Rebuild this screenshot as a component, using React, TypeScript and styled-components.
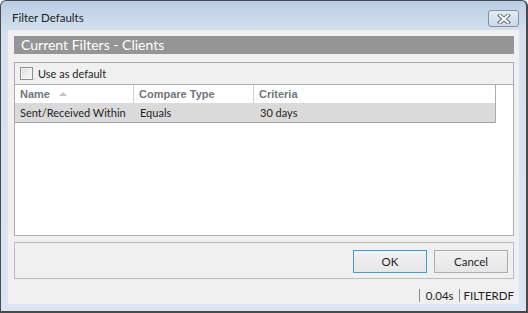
import React from 'react';
import styled, { createGlobalStyle } from 'styled-components';

const GlobalStyle = createGlobalStyle`
    html, body {
        margin: 0;
        padding: 0;
        background: #ffffff;
    }
    body {
        font-family: 'Lato', 'Open Sans', sans-serif;
        font-size: 11px;
        color: #1e1e1e;
    }
`;

const Window = styled.div`
    box-sizing: border-box;
    width: 528px;
    height: 313px;
    display: flex;
    flex-direction: column;
    border: 1px solid #4a4a4a;
    border-right-width: 2px;
    border-bottom-width: 2px;
    border-radius: 6px 6px 0 0;
    padding: 0 7px 7px 7px;
    background: linear-gradient(#bacee4 0px, #d3e1ef 30px, #d9e5f2 100%);
`;

const TitleBar = styled.div`
    height: 29px;
    display: flex;
    justify-content: space-between;
    align-items: flex-start;
    padding: 9px 0 0 4px;
    box-sizing: border-box;
`;

const Title = styled.div`
    font-size: 11.5px;
    line-height: 16px;
    color: #1e1e1e;
`;

const CloseButton = styled.div`
    box-sizing: border-box;
    width: 31px;
    height: 17px;
    border: 1px solid #8391a4;
    border-radius: 3px;
    background: linear-gradient(#e2eaf3, #cdd9e7);
    display: flex;
    align-items: center;
    justify-content: center;
`;

const Client = styled.div`
    flex: 1;
    display: flex;
    flex-direction: column;
    background: #f0f0f0;
    padding: 6px 5px 0 6px;
    min-height: 0;
`;

const SectionHeader = styled.div`
    height: 18px;
    background: #959595;
    color: #ffffff;
    font-size: 14px;
    line-height: 18px;
    padding-left: 7px;
`;

const FilterPanel = styled.div`
    margin-top: 8px;
    height: 174px;
    box-sizing: border-box;
    border: 1px solid #acacac;
    background: #ffffff;
    display: flex;
    flex-direction: column;
`;

const CheckRow = styled.div`
    height: 22px;
    box-sizing: border-box;
    background: #f0f0f0;
    border-bottom: 1px solid #acacac;
    display: flex;
    align-items: center;
    padding-left: 5px;
    gap: 5px;
`;

const CheckBox = styled.div`
    box-sizing: border-box;
    width: 13px;
    height: 13px;
    border: 1px solid #8e8f8f;
    background: linear-gradient(135deg, #dcdcdc, #fbfbfb);
    box-shadow: inset 0 0 0 1px #f4f4f4;
`;

const Grid = styled.div`
    width: 481px;
    box-sizing: border-box;
    border-right: 1px solid #acacac;
`;

const HeaderRow = styled.div`
    display: grid;
    grid-template-columns: 119px 120px 1fr;
    height: 18px;
`;

const HeaderCell = styled.div<{ $last?: boolean }>`
    font-family: 'Liberation Sans', Arial, sans-serif;
    font-weight: bold;
    font-size: 11px;
    color: #72767d;
    line-height: 18px;
    padding-left: 5px;
    border-right: ${(p) => (p.$last ? 'none' : '1px solid #d0d0d0')};
    display: flex;
    align-items: center;
`;

const SortArrow = styled.span`
    width: 0;
    height: 0;
    margin-left: 9px;
    margin-top: -1px;
    border-left: 4px solid transparent;
    border-right: 4px solid transparent;
    border-bottom: 4px solid #c4c4c4;
`;

const DataRow = styled.div`
    display: grid;
    grid-template-columns: 120px 120px 1fr;
    height: 19px;
    background: #dadada;
    border-bottom: 1px solid #a5a5a5;
`;

const DataCell = styled.div`
    padding-left: 5px;
    line-height: 19px;
    white-space: nowrap;
`;

const ButtonPanel = styled.div`
    margin-top: 6px;
    height: 37px;
    box-sizing: border-box;
    border: 1px solid #bcbcbc;
    display: flex;
    justify-content: flex-end;
    align-items: flex-start;
    padding: 7px 5px 0 0;
    gap: 7px;
`;

const Button = styled.div<{ $focused?: boolean }>`
    box-sizing: border-box;
    width: 74px;
    height: 23px;
    border: 1px solid ${(p) => (p.$focused ? '#3c9fd6' : '#adadad')};
    background: linear-gradient(#f2f2f2, #e6e6e6);
    display: flex;
    align-items: center;
    justify-content: center;
    font-size: 11.5px;
`;

const StatusBar = styled.div`
    flex: 1;
    display: flex;
    justify-content: flex-end;
    align-items: flex-end;
    padding: 0 0 2px 0;
`;

const StatusItem = styled.div`
    border-left: 1px solid #8a8a8a;
    height: 13px;
    line-height: 13px;
    padding-left: 4px;
    margin-left: 2px;
    font-size: 11.5px;
`;

const StatusValue = styled(StatusItem)`
    padding-left: 6px;
    padding-right: 3px;
`;

const CloseGlyph = () => (
    <svg width="14" height="10" viewBox="0 0 14 10">
        <path d="M3 1.5 L11 8.5 M11 1.5 L3 8.5" stroke="#606b79" strokeWidth="4" strokeLinecap="square" />
        <path d="M3 1.5 L11 8.5 M11 1.5 L3 8.5" stroke="#ffffff" strokeWidth="2" strokeLinecap="square" />
    </svg>
);

export default function App() {
    return (
        <>
            <GlobalStyle />
            <Window>
                <TitleBar>
                    <Title>Filter Defaults</Title>
                    <CloseButton>
                        <CloseGlyph />
                    </CloseButton>
                </TitleBar>
                <Client>
                    <SectionHeader>Current Filters - Clients</SectionHeader>
                    <FilterPanel>
                        <CheckRow>
                            <CheckBox />
                            <span>Use as default</span>
                        </CheckRow>
                        <Grid>
                            <HeaderRow>
                                <HeaderCell>
                                    Name
                                    <SortArrow />
                                </HeaderCell>
                                <HeaderCell>Compare Type</HeaderCell>
                                <HeaderCell $last>Criteria</HeaderCell>
                            </HeaderRow>
                            <DataRow>
                                <DataCell>Sent/Received Within</DataCell>
                                <DataCell>Equals</DataCell>
                                <DataCell>30 days</DataCell>
                            </DataRow>
                        </Grid>
                    </FilterPanel>
                    <ButtonPanel>
                        <Button $focused>OK</Button>
                        <Button>Cancel</Button>
                    </ButtonPanel>
                    <StatusBar>
                        <StatusValue>0.04s</StatusValue>
                        <StatusItem>FILTERDF</StatusItem>
                    </StatusBar>
                </Client>
            </Window>
        </>
    );
}
